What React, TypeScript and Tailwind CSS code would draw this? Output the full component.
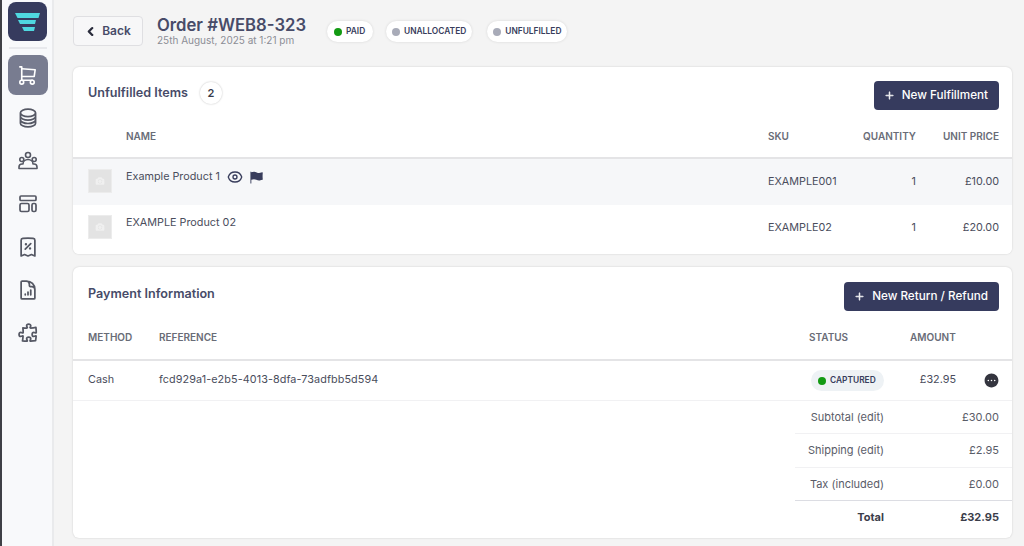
import {
  HiOutlineCircleStack,
  HiOutlineReceiptPercent,
  HiOutlineDocumentChartBar,
  HiOutlinePuzzlePiece,
  HiOutlineEye,
  HiFlag,
  HiPlus,
  HiChevronLeft,
  HiEllipsisHorizontalCircle,
  HiCamera,
} from "react-icons/hi2";
import { TbShoppingCart } from "react-icons/tb";

function Logo() {
  return (
    <div className="w-[39px] h-[39px] mt-[2px] rounded-lg bg-[#363b5e]">
      <svg width="39" height="39" viewBox="0 0 39 39">
        <path d="M7 11 H32 L30.5 16 H9.5 Z" fill="#4fd8e0" />
        <path d="M10 18 H28 L27 22 H12 Z" fill="#4fd8e0" />
        <path d="M14 25 H27 L26 29 H16 Z" fill="#4fd8e0" />
      </svg>
    </div>
  );
}

function UsersIcon() {
  return (
    <svg width="22" height="22" viewBox="0 0 22 22" fill="none" stroke="currentColor" strokeWidth="1.6">
      <circle cx="11" cy="5" r="2.5" />
      <circle cx="4.8" cy="9.5" r="2" />
      <circle cx="17.2" cy="9.5" r="2" />
      <path d="M2 18.5 V17 a3 3 0 0 1 3-3 h1 a5 4.5 0 0 1 10 0 h1 a3 3 0 0 1 3 3 v1.5 Z" strokeLinejoin="round" />
    </svg>
  );
}

function LayoutIcon() {
  return (
    <svg width="22" height="22" viewBox="0 0 22 22" fill="none" stroke="currentColor" strokeWidth="1.7">
      <rect x="3" y="3" width="16" height="4.5" rx="1" />
      <rect x="3" y="10.5" width="9" height="8" rx="1.5" />
      <rect x="15" y="10.5" width="4" height="8" rx="1.5" />
    </svg>
  );
}

function Sidebar() {
  return (
    <aside className="w-[54px] shrink-0 h-full bg-[#f8f9fb] border-l-2 border-l-[#3f4046] border-r-2 border-r-[#e9eaec] pl-px flex flex-col items-center">
      <Logo />
      <div className="w-[38px] h-[2px] bg-[#e8e9ed] mt-[6px]" />
      <div className="w-10 h-10 mt-[6px] rounded-lg bg-[#787c90] flex items-center justify-center text-white">
        <TbShoppingCart size={23} strokeWidth={1.7} />
      </div>
      <div className="flex flex-col items-center gap-[21px] mt-[12px] text-[#555864]">
        <HiOutlineCircleStack size={22} strokeWidth={1.9} />
        <UsersIcon />
        <LayoutIcon />
        <HiOutlineReceiptPercent size={22} strokeWidth={1.9} />
        <HiOutlineDocumentChartBar size={22} strokeWidth={1.9} />
        <HiOutlinePuzzlePiece size={22} strokeWidth={1.9} />
      </div>
    </aside>
  );
}

function Pill({ dot, label, captured, size }: { dot: string; label: string; captured?: boolean; size?: string }) {
  const look = captured ? "bg-[#eef2f5]" : "bg-white shadow-[0_0_3px_rgba(0,0,0,0.12)]";
  return (
    <span className={`flex items-center gap-[4px] h-[21px] px-[6px] rounded-full ${look} ${size ?? ""} text-[8.4px] font-semibold text-[#383d5c] uppercase`}>
      <span className={`w-2 h-2 rounded-full ${dot}`} />
      {label}
    </span>
  );
}

function Thumb() {
  return (
    <div className="w-6 h-6 shrink-0 bg-[#e3e3e3] border border-[#ececec] flex items-center justify-center text-[#f0f0f0]">
      <HiCamera size={10} />
    </div>
  );
}

function PrimaryButton({ label }: { label: string }) {
  return (
    <button className="h-[29px] pl-[10px] pr-[11px] rounded bg-[#363b5e] text-white text-[11.7px] font-medium flex items-center gap-[7px]">
      <HiPlus size={11} strokeWidth={1.5} />
      {label}
    </button>
  );
}

const th = "text-[10px] font-semibold text-[#696c77] uppercase";
const td = "text-[10.8px] text-[#4a4d5c]";

function ItemRow({ name, sku, price, shaded, icons, height }: { name: string; sku: string; price: string; shaded?: boolean; icons?: boolean; height: string }) {
  return (
    <div className={`${height} flex items-start pt-[10px] pl-[15px] pr-[13px] ${shaded ? "bg-[#f6f7f9]" : "bg-white"}`}>
      <Thumb />
      <div className={`${td} ml-[14px] w-[642px] flex items-center gap-[6px] h-[16px]`}>
        {name}
        {icons && (
          <>
            <HiOutlineEye size={16} strokeWidth={2} className="text-[#383d5c] ml-[1px]" />
            <HiFlag size={15} className="text-[#383d5c]" />
          </>
        )}
      </div>
      <div className={`${td} w-[80px] h-[26px] flex items-center`}>{sku}</div>
      <div className={`${td} w-[68px] h-[26px] flex items-center justify-end`}>1</div>
      <div className={`${td} flex-1 h-[26px] flex items-center justify-end`}>{price}</div>
    </div>
  );
}

function TotalRow({ label, value, line, bold, height }: { label: string; value: string; line?: string; bold?: boolean; height: string }) {
  return (
    <div className={`ml-auto w-[217px] ${height} flex items-center pr-[13px] ${line ?? ""} text-[11px] ${bold ? "font-bold text-[#3b3d4a]" : "text-[#5a5c68]"}`}>
      <div className="w-[89px] text-right">{label}</div>
      <div className="flex-1 text-right">{value}</div>
    </div>
  );
}

export default function App() {
  return (
    <div className="w-[1024px] h-[546px] overflow-hidden flex bg-[#f4f4f4] font-['Inter',sans-serif]">
      <Sidebar />
      <main className="flex-1 pl-[19px] pr-3">
        <header className="h-[67px] flex items-start pt-[16px]">
          <button className="w-[70px] h-[30px] rounded border border-[#dfdfe2] bg-[#f7f7f8] flex items-center justify-center gap-[6px] text-[#474b68] text-[12px] font-semibold">
            <HiChevronLeft size={11} strokeWidth={3.5} className="text-[#2a2c3c]" />
            Back
          </button>
          <div className="ml-[14px] -mt-[1px] w-[170px]">
            <h1 className="text-[16.7px] leading-[20px] font-semibold text-[#474b68]">Order #WEB8-323</h1>
            <p className="text-[10px] leading-[11px] text-[#8c8e96]">25th August, 2025 at 1:21 pm</p>
          </div>
          <div className="mt-[5px] flex gap-[13px]">
            <Pill dot="bg-[#139a13]" label="Paid" size="w-[46px] pl-[7px]" />
            <Pill dot="bg-[#a8abb8]" label="Unallocated" />
            <Pill dot="bg-[#a8abb8]" label="Unfulfilled" size="ml-[2px]" />
          </div>
        </header>

        <section className="h-[187px] bg-white rounded-md shadow-[0_0_2px_rgba(0,0,0,0.18)] overflow-hidden">
          <div className="h-[50px] flex items-start pl-[15px] pr-[13px] pt-[14px]">
            <h2 className="text-[12.6px] leading-[22px] mt-px font-semibold text-[#474b68]">Unfulfilled Items</h2>
            <span className="ml-[12px] mt-px w-[22px] h-[22px] rounded-full bg-white shadow-[0_0_2px_rgba(0,0,0,0.25)] flex items-center justify-center text-[11px] font-semibold text-[#383b4a]">2</span>
            <div className="ml-auto">
              <PrimaryButton label="New Fulfillment" />
            </div>
          </div>
          <div className="h-[42px] flex items-center pl-[53px] pr-[13px] pb-[2px] border-b-2 border-[#e4e4e6]">
            <div className={`${th} w-[642px]`}>Name</div>
            <div className={`${th} w-[80px]`}>SKU</div>
            <div className={`${th} w-[68px] text-right`}>Quantity</div>
            <div className={`${th} flex-1 text-right`}>Unit Price</div>
          </div>
          <ItemRow name="Example Product 1" sku="EXAMPLE001" price="£10.00" shaded icons height="h-[46px]" />
          <ItemRow name="EXAMPLE Product 02" sku="EXAMPLE02" price="£20.00" height="h-[49px]" />
        </section>

        <section className="mt-[13px] h-[271px] bg-white rounded-md shadow-[0_0_2px_rgba(0,0,0,0.18)] overflow-hidden">
          <div className="h-[50px] flex items-start justify-between pl-[15px] pr-[13px] pt-[15px]">
            <h2 className="text-[12.6px] leading-[22px] mt-px font-semibold text-[#474b68]">Payment Information</h2>
            <PrimaryButton label="New Return / Refund" />
          </div>
          <div className="h-[44px] flex items-center pl-[15px] pb-[2px] border-b-2 border-[#e4e4e6]">
            <div className={`${th} w-[71px]`}>Method</div>
            <div className={`${th} w-[650px]`}>Reference</div>
            <div className={`${th} w-[101px]`}>Status</div>
            <div className={th}>Amount</div>
          </div>
          <div className="h-[40px] flex items-center pl-[15px] border-b border-[#f1f1f3]">
            <div className={`${td} w-[71px]`}>Cash</div>
            <div className={`${td} w-[650px] tracking-[0.09px]`}>fcd929a1-e2b5-4013-8dfa-73adfbb5d594</div>
            <div className="w-[101px] pl-[2px]">
              <Pill dot="bg-[#139a13]" label="Captured" captured size="w-[73px] pl-[7px]" />
            </div>
            <div className={`${td} w-[46px] text-right`}>£32.95</div>
            <HiEllipsisHorizontalCircle size={17} className="ml-[27px] text-[#34353f]" />
          </div>
          <TotalRow label="Subtotal (edit)" value="£30.00" line="border-b border-[#f1f1f3]" height="h-[33px]" />
          <TotalRow label="Shipping (edit)" value="£2.95" line="border-b border-[#f1f1f3]" height="h-[34px]" />
          <TotalRow label="Tax (included)" value="£0.00" line="border-b border-[#dcdde3]" height="h-[33px]" />
          <TotalRow label="Total" value="£32.95" bold height="h-[33px]" />
        </section>
      </main>
    </div>
  );
}
